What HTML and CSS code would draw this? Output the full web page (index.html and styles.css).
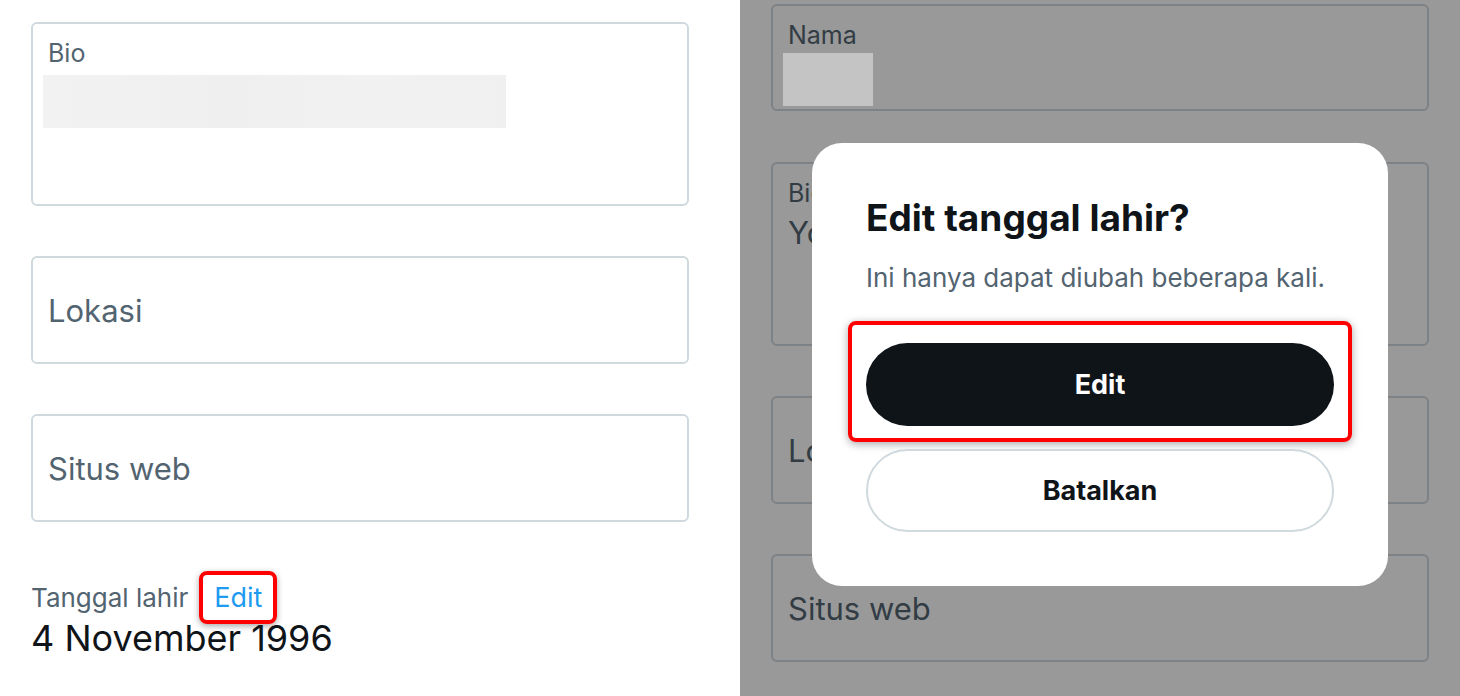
FILE: index.html
```html
<!DOCTYPE html>
<html lang="id">
<head>
<meta charset="utf-8">
<title>Edit tanggal lahir</title>
<link rel="stylesheet" href="styles.css">
</head>
<body>
<div class="page">
  <section class="panel left">
    <div class="field bio">
      <div class="label">Bio</div>
      <div class="blur"></div>
    </div>
    <div class="field single"><span class="ph">Lokasi</span></div>
    <div class="field single"><span class="ph">Situs web</span></div>
    <div class="birth">
      <div class="birth-row">
        <span class="birth-label">Tanggal lahir</span>
        <span class="edit-link">Edit</span>
      </div>
      <div class="birth-date">4 November 1996</div>
    </div>
  </section>
  <section class="panel right">
    <div class="field name">
      <div class="label">Nama</div>
      <div class="blur-dim"></div>
    </div>
    <div class="field bio">
      <div class="label">Bio</div>
      <div class="value">Yo</div>
    </div>
    <div class="field single"><span class="ph">Lokasi</span></div>
    <div class="field single"><span class="ph">Situs web</span></div>

    <div class="modal">
      <h2 class="modal-title">Edit tanggal lahir?</h2>
      <p class="modal-text">Ini hanya dapat diubah beberapa kali.</p>
      <div class="highlight">
        <button class="btn primary">Edit</button>
      </div>
      <button class="btn secondary">Batalkan</button>
    </div>
  </section>
</div>
</body>
</html>
```
FILE: styles.css
```css
* { box-sizing: border-box; }
html, body { margin: 0; padding: 0; }
body {
  font-family: "Inter", "Roboto", "Liberation Sans", sans-serif;
  width: 1460px;
  height: 696px;
  overflow: hidden;
}
.page {
  display: flex;
  width: 1460px;
  height: 696px;
}
.panel {
  display: flex;
  flex-direction: column;
  gap: 50px;
}
.left {
  width: 740px;
  background: #ffffff;
  padding: 22px 51px 0 31px;
}
.right {
  position: relative;
  width: 720px;
  background: #999999;
  padding: 4px 31px 0 31px;
}
.field {
  border: 2px solid #cfd9de;
  border-radius: 6px;
  flex: none;
  position: relative;
}
.right .field { border-color: #7c8285; }
.field.bio { height: 184px; padding: 15px 15px 0 15px; }
.field.name { height: 107px; padding: 15px 15px 0 15px; margin-bottom: 1px; }
.field.single {
  height: 108px;
  display: flex;
  align-items: center;
  padding: 0 15px 0 15px;
}
.label {
  font-size: 25px;
  line-height: 28px;
  color: #536471;
}
.right .label, .right .ph, .right .value { color: #323c44; }
.ph {
  font-size: 31px;
  color: #536471;
}
.value {
  font-size: 31px;
  line-height: 40px;
  margin-top: 6px;
}
.blur {
  margin: 8px 0 0 -5px;
  width: 463px;
  height: 53px;
  background: linear-gradient(90deg, #f2f2f2, #efefef 40%, #f1f1f1 70%, #f0f0f0);
}
.blur-dim {
  margin: 4px 0 0 -5px;
  width: 90px;
  height: 53px;
  background: #c4c4c4;
}
.birth {
  margin-top: -1px;
  display: flex;
  flex-direction: column;
}
.birth-row {
  display: flex;
  align-items: center;
  gap: 11px;
  height: 53px;
}
.birth-label {
  font-size: 26px;
  color: #536471;
}
.edit-link {
  font-size: 27px;
  line-height: 33px;
  color: #1d9bf0;
  border: 4px solid #ff0000;
  border-radius: 8px;
  padding: 6px 11px;
  box-shadow: 0 2px 6px rgba(0,0,0,0.35);
}
.birth-date {
  margin-top: -6px;
  font-size: 36px;
  color: #0f1419;
  line-height: 40px;
}
.modal {
  position: absolute;
  left: 72px;
  top: 143px;
  width: 576px;
  height: 443px;
  background: #ffffff;
  border-radius: 30px;
  padding: 50px 54px 0 54px;
  display: flex;
  flex-direction: column;
}
.modal-title {
  margin: 0;
  font-size: 37px;
  font-weight: 700;
  color: #0f1419;
  line-height: 50px;
}
.modal-text {
  margin: 19px 0 0;
  font-size: 26px;
  line-height: 32px;
  color: #536471;
}
.highlight {
  margin: 27px -18px 0;
  border: 4px solid #ff0000;
  border-radius: 8px;
  padding: 18px 14px 12px;
  box-shadow: 0 2px 8px rgba(0,0,0,0.35);
}
.btn {
  display: block;
  width: 468px;
  height: 83px;
  border-radius: 42px;
  font-family: inherit;
  font-size: 27px;
  font-weight: 700;
  cursor: pointer;
}
.primary {
  background: #0f1419;
  color: #ffffff;
  border: none;
}
.secondary {
  margin-top: 7px;
  background: #ffffff;
  color: #0f1419;
  border: 2px solid #cfd9de;
}
```
